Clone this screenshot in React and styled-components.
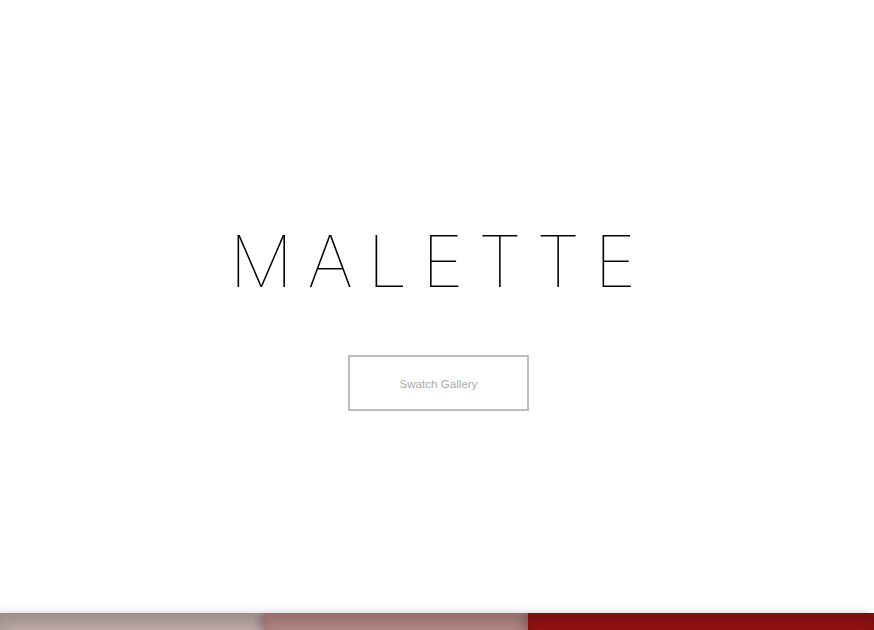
import React from "react";
import styled, { createGlobalStyle } from "styled-components";

const swatches = ["#c6b2ad", "#bb8c8a", "#9a1313"];

function App() {
  return (
    <>
      <GlobalStyle />
      <Page>
        <Hero>
          <Title>MALETTE</Title>
          <GalleryButton>Swatch Gallery</GalleryButton>
        </Hero>
        <SwatchRow>
          {swatches.map((color, i) => (
            <Swatch
              key={i}
              $color={color}
              $index={i}
              $last={i === swatches.length - 1}
            />
          ))}
        </SwatchRow>
      </Page>
    </>
  );
}

export default App;

const GlobalStyle = createGlobalStyle`
  html, body {
    margin: 0;
    padding: 0;
    background: #fff;
  }
  body {
    font-family: "Liberation Sans", Arial, sans-serif;
  }
`;

const Page = styled.div`
  height: 630px;
  overflow: hidden;
  display: flex;
  flex-direction: column;
`;

const Hero = styled.div`
  height: 613px;
  flex-shrink: 0;
  display: flex;
  flex-direction: column;
  align-items: center;
  padding-top: 216px;
  box-sizing: border-box;
`;

const Title = styled.h1`
  margin: 0 0 0 6px;
  font-family: Inter, "Open Sans", sans-serif;
  font-weight: 100;
  font-size: 71px;
  line-height: 90px;
  letter-spacing: 14.5px;
  color: #000;
`;

const GalleryButton = styled.button`
  margin: 49px 0 0 3px;
  width: 181px;
  height: 56px;
  border: 2px solid #bdbdbd;
  background: #fff;
  color: #aaaaaa;
  font-family: "Liberation Sans", Arial, sans-serif;
  font-size: 11.6px;
  padding-top: 2px;
  cursor: pointer;
`;

const SwatchRow = styled.div`
  display: flex;
  height: 17px;
`;

const Swatch = styled.div`
  position: relative;
  z-index: ${(p) => p.$index + 1};
  flex: ${(p) => (p.$last ? "1 1 auto" : "0 0 264px")};
  height: 100%;
  background: ${(p) => p.$color};
  box-shadow: inset 0 12px 14px rgba(0, 0, 0, 0.2),
    -4px 0 8px rgba(0, 0, 0, 0.2);
`;
